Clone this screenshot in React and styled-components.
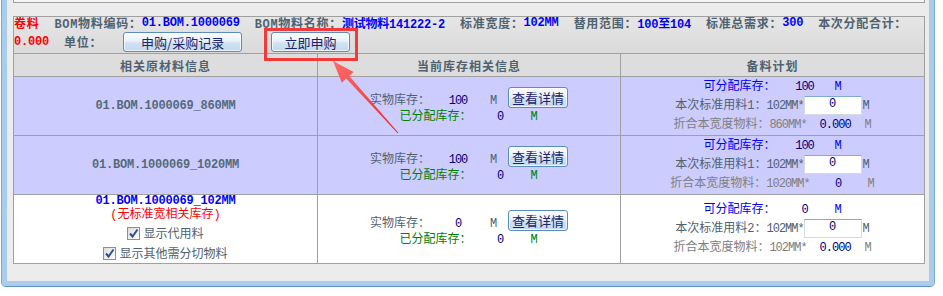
import React from 'react';
import styled, { createGlobalStyle } from 'styled-components';

const GlobalStyle = createGlobalStyle`
  html, body {
    margin: 0;
    padding: 0;
    background: #ffffff;
  }
  body {
    font-family: "Liberation Mono", "Noto Sans CJK SC", monospace;
    font-size: 12px;
  }
`;

const Page = styled.div`
  position: relative;
  width: 943px;
  height: 296px;
  overflow: hidden;
`;

const Frame = styled.div`
  box-sizing: border-box;
  width: 932px;
  margin-left: 2px;
  background: #ececec;
  border: 5px solid #a9cdec;
  border-top: 0;
  border-radius: 0 0 4px 4px;
  padding: 0 4px 17px 6px;
  box-shadow: -1px 0 0 #7fa9d2, 1px 0 0 #7fa9d2, 0 1px 0 #5f8fbd;
`;

const TopStub = styled.div`
  height: 2px;
  border: 1px solid #a0a0a0;
  border-top: 0;
  background: #f4f4f4;
  margin-bottom: 13px;
`;

const Panel = styled.div`
  border: 1px solid #a0a0a0;
  background: #ffffff;
`;

const InfoBar = styled.div`
  box-sizing: border-box;
  height: 36px;
  background: linear-gradient(#e6e6e6, #dadada);
  display: flex;
  flex-direction: column;
`;

const InfoLine = styled.div`
  display: flex;
  align-items: center;
  white-space: nowrap;
  height: ${p => p.$h}px;
  margin-top: ${p => p.$mt || 0}px;
`;

const Lbl = styled.span`
  font-weight: bold;
  color: ${p => p.$c || '#4f6272'};
  letter-spacing: 0.7px;
`;

const Val = styled.span`
  font-weight: bold;
  color: ${p => p.$c || '#0000ff'};
  letter-spacing: -0.2px;
  margin-right: ${p => (p.$gap === undefined ? 15 : p.$gap)}px;
`;

const Btn = styled.button`
  box-sizing: border-box;
  width: ${p => p.$w}px;
  height: ${p => p.$h || 20}px;
  margin-left: ${p => p.$ml || 0}px;
  padding: 0;
  border: 1px solid #5b8cc0;
  border-radius: 3px;
  background: linear-gradient(#fbfdff 0%, #e8f1fa 45%, #d2e3f4 55%, #c3d8ee 100%);
  box-shadow: inset 0 0 0 1px rgba(255, 255, 255, 0.7);
  color: #1a2470;
  font-family: "Noto Sans CJK SC", sans-serif;
  font-size: 13px;
  line-height: 1;
  cursor: pointer;
`;

const Grid = styled.div`
  display: grid;
  grid-template-columns: 303px 303px 304px;
`;

const Cell = styled.div`
  box-sizing: border-box;
  height: ${p => p.$h}px;
  border-top: 1px solid #a0a0a0;
  border-left: ${p => (p.$first ? '0' : '1px solid #a0a0a0')};
  background: ${p => p.$bg || '#ffffff'};
  display: flex;
  flex-direction: column;
  align-items: center;
  justify-content: ${p => p.$top ? 'flex-start' : 'center'};
`;

const HeadCell = styled(Cell)`
  background: #dddddd;
  font-weight: bold;
  color: #4f6272;
  letter-spacing: 1px;
  font-family: "Noto Sans CJK SC", sans-serif;
`;

const Code = styled.div`
  font-weight: bold;
  color: ${p => p.$c || '#546a78'};
  height: ${p => p.$h || 'auto'};
  line-height: ${p => p.$h || 'normal'};
  letter-spacing: -0.2px;
`;

const Warn = styled.div`
  color: #ff0000;
  height: 15px;
  line-height: 15px;
`;

const CheckLine = styled.label`
  display: flex;
  align-items: center;
  gap: 3px;
  height: 20px;
  color: #4f6272;
`;

const Box = styled.span`
  box-sizing: border-box;
  width: 13px;
  height: 13px;
  border: 1px solid #8e8f8f;
  background: linear-gradient(135deg, #dcdcdc, #ffffff);
  display: inline-flex;
  align-items: center;
  justify-content: center;
`;

const Line = styled.div`
  display: flex;
  align-items: ${p => p.$align || 'center'};
  height: ${p => p.$h}px;
  white-space: nowrap;
`;

const Text = styled.span`
  color: ${p => p.$c || '#4f6272'};
  line-height: 14px;
`;

const Num = styled.span`
  display: inline-block;
  width: ${p => p.$w}px;
  text-align: center;
  color: ${p => p.$c || '#000080'};
  letter-spacing: -1px;
  line-height: 14px;
`;

const Small = styled.span`
  color: ${p => p.$c || '#4f6272'};
  letter-spacing: -1px;
`;

const Qty = styled.input`
  box-sizing: border-box;
  width: 58px;
  height: 19px;
  border: 1px solid #d4dbe2;
  border-top-color: #7fa9d6;
  background: #ffffff;
  color: #000080;
  text-align: center;
  font-family: "Liberation Mono", monospace;
  font-size: 12px;
  padding: 0 0 3px;
  outline: none;
`;

const Overlay = styled.svg`
  position: absolute;
  top: 0;
  left: 0;
  pointer-events: none;
`;

const rows = [
  { bg: '#ccccff', code: '01.BOM.1000069_860MM', stock: '100', assigned: '0', avail: '100', no: 1, width: '860MM*', fold: '0.000', h: 59 },
  { bg: '#ccccff', code: '01.BOM.1000069_1020MM', stock: '100', assigned: '0', avail: '100', no: 1, width: '1020MM*', fold: '0', h: 59 },
  { bg: '#ffffff', code: '01.BOM.1000069_102MM', main: true, stock: '0', assigned: '0', avail: '0', no: 2, width: '102MM*', fold: '0.000', h: 69 },
];

const Check = ({ children }) => (
  <CheckLine>
    <Box>
      <svg width="11" height="11" viewBox="0 0 11 11">
        <path d="M2 5.5 L4.5 8.5 L9.5 1.5" fill="none" stroke="#2d4f96" strokeWidth="2" />
      </svg>
    </Box>
    {children}
  </CheckLine>
);

const Row = ({ r }) => (
  <>
    <Cell $first $bg={r.bg} $h={r.h} $top={r.main}>
      {r.main ? (
        <>
          <Code $c="#0000ff" $h="13px">{r.code}</Code>
          <Warn>(无标准宽相关库存)</Warn>
          <Check>显示代用料</Check>
          <Check>显示其他需分切物料</Check>
        </>
      ) : (
        <Code>{r.code}</Code>
      )}
    </Cell>
    <Cell $bg={r.bg} $h={r.h}>
      <Line $h={21} $align="flex-end">
        <Text>实物库存：</Text>
        <Num $w={56}>{r.stock}</Num>
        <Num $w={14} $c="#4f6272">M</Num>
        <Btn $w={60} $h={21} $ml={8}>查看详情</Btn>
      </Line>
      <Line $h={18}>
        <Text $c="#008000">已分配库存：</Text>
        <Num $w={57}>{r.assigned}</Num>
        <Num $w={10} $c="#008000">M</Num>
      </Line>
    </Cell>
    <Cell $bg={r.bg} $h={r.h}>
      <Line $h={17}>
        <Text $c="#0000ff">可分配库存：</Text>
        <Num $w={58}>{r.avail}</Num>
        <Num $w={8} $c="#0000ff">M</Num>
      </Line>
      <Line $h={21}>
        <Text>本次标准用料{r.no}：</Text>
        <Small>102MM*</Small>
        <Qty readOnly value="0" />
        <Num $w={8} $c="#4f6272">M</Num>
      </Line>
      <Line $h={18}>
        <Text $c="#808080">折合本宽度物料：</Text>
        <Small $c="#808080">{r.width}</Small>
        <Num $w={57}>{r.fold}</Num>
        <Num $w={8} $c="#808080">M</Num>
      </Line>
    </Cell>
  </>
);

export default function App() {
  return (
    <Page>
      <GlobalStyle />
      <Frame>
        <TopStub />
        <Panel>
          <InfoBar>
            <InfoLine $h={13} $mt={-1}>
              <Val $c="#ff0000"><Lbl $c="#ff0000">卷料</Lbl></Val>
              <Lbl>BOM物料编码：</Lbl>
              <Val>01.BOM.1000069</Val>
              <Lbl>BOM物料名称：</Lbl>
              <Val>测试物料141222-2</Val>
              <Lbl>标准宽度：</Lbl>
              <Val>102MM</Val>
              <Lbl>替用范围：</Lbl>
              <Val>100至104</Val>
              <Lbl>标准总需求：</Lbl>
              <Val>300</Val>
              <Lbl>本次分配合计：</Lbl>
            </InfoLine>
            <InfoLine $h={20} $mt={3}>
              <Val $c="#ff0000">0.000</Val>
              <Lbl>单位：</Lbl>
              <Btn $w={119} $ml={21}>申购/采购记录</Btn>
              <Btn $w={79} $ml={29}>立即申购</Btn>
            </InfoLine>
          </InfoBar>
          <Grid>
            <HeadCell $first $h={23}>相关原材料信息</HeadCell>
            <HeadCell $h={23}>当前库存相关信息</HeadCell>
            <HeadCell $h={23}>备料计划</HeadCell>
            {rows.map(r => <Row key={r.code} r={r} />)}
          </Grid>
        </Panel>
      </Frame>
      <Overlay width="943" height="296">
        <defs>
          <linearGradient id="arrowFill" x1="0" y1="0" x2="1" y2="1">
            <stop offset="0" stopColor="#ff6b6b" />
            <stop offset="1" stopColor="#e82a2a" />
          </linearGradient>
        </defs>
        <rect x="265.5" y="29.5" width="91" height="30" fill="none" stroke="#f23a3a" strokeWidth="3" />
        <polygon
          points="333,61 353.6,71.9 349.2,76 398.4,132.7 397.6,133.3 346.2,78.6 341.8,82.7"
          fill="url(#arrowFill)"
        />
      </Overlay>
    </Page>
  );
}
